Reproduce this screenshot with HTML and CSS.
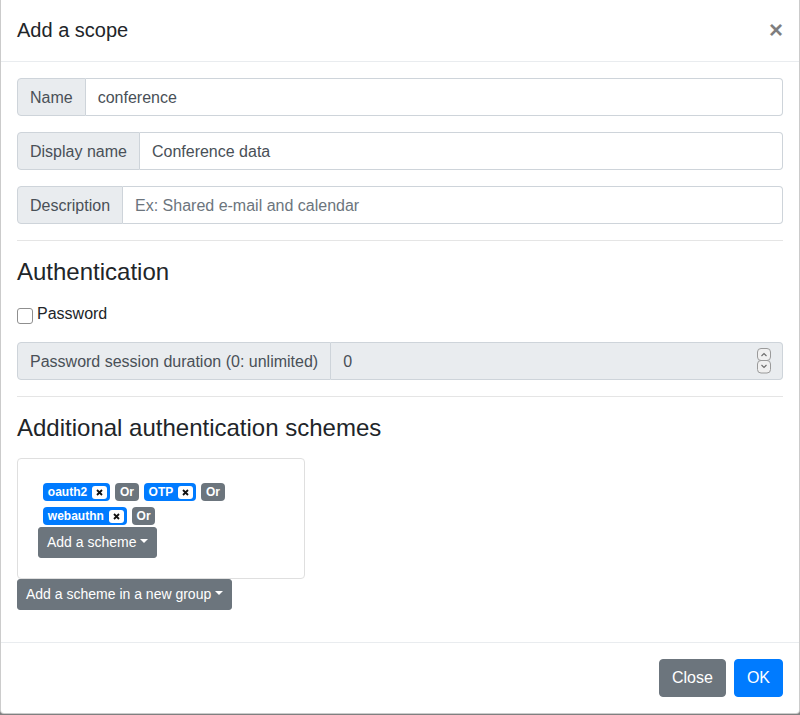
FILE: index.html
```html
<!DOCTYPE html>
<html>
<head>
<meta charset="utf-8">
<link rel="stylesheet" href="styles.css">
</head>
<body>
<div class="modal">
  <div class="modal-header">
    <h5 class="modal-title">Add a scope</h5>
    <button class="close" type="button">×</button>
  </div>
  <div class="modal-body">
    <div class="input-group">
      <span class="addon">Name</span>
      <span class="field">conference</span>
    </div>
    <div class="input-group">
      <span class="addon">Display name</span>
      <span class="field">Conference data</span>
    </div>
    <div class="input-group">
      <span class="addon">Description</span>
      <span class="field placeholder">Ex: Shared e-mail and calendar</span>
    </div>
    <hr class="sep">
    <h4 class="section-title">Authentication</h4>
    <div class="check-row">
      <span class="checkbox"></span>
      <span class="check-label">Password</span>
    </div>
    <div class="input-group">
      <span class="addon">Password session duration (0: unlimited)</span>
      <span class="field disabled">0
        <svg class="spin" width="14" height="26" viewBox="0 0 14 26">
          <rect x="0.5" y="0.5" width="13" height="12" rx="3.5" fill="#f0f0f0" stroke="#9a9a9a"/>
          <rect x="0.5" y="12.5" width="13" height="12.5" rx="3.5" fill="#f0f0f0" stroke="#9a9a9a"/>
          <path d="M4.5 8 L7 5.5 L9.5 8" fill="none" stroke="#6a6a6a" stroke-width="1.1"/>
          <path d="M4.5 17 L7 19.5 L9.5 17" fill="none" stroke="#6a6a6a" stroke-width="1.1"/>
        </svg>
      </span>
    </div>
    <hr class="sep">
    <h4 class="section-title">Additional authentication schemes</h4>
    <div class="scheme-group">
      <div class="scheme-box">
        <div class="badge-list">
          <span class="badge badge-primary">oauth2<span class="badge-x"><svg width="7" height="7" viewBox="0 0 7 7"><path d="M1 1 L6 6 M6 1 L1 6" stroke="#111" stroke-width="1.8"/></svg></span></span>
          <span class="badge badge-secondary">Or</span>
          <span class="badge badge-primary">OTP<span class="badge-x"><svg width="7" height="7" viewBox="0 0 7 7"><path d="M1 1 L6 6 M6 1 L1 6" stroke="#111" stroke-width="1.8"/></svg></span></span>
          <span class="badge badge-secondary">Or</span>
          <span class="badge badge-primary">webauthn<span class="badge-x"><svg width="7" height="7" viewBox="0 0 7 7"><path d="M1 1 L6 6 M6 1 L1 6" stroke="#111" stroke-width="1.8"/></svg></span></span>
          <span class="badge badge-secondary">Or</span>
        </div>
        <button class="btn btn-sm btn-secondary dropdown-toggle" type="button">Add a scheme</button>
      </div>
      <button class="btn btn-sm btn-secondary dropdown-toggle" type="button">Add a scheme in a new group</button>
    </div>
  </div>
  <div class="modal-footer">
    <button class="btn btn-secondary" type="button">Close</button>
    <button class="btn btn-primary" type="button">OK</button>
  </div>
</div>
</body>
</html>
```

FILE: styles.css
```css
* { box-sizing: border-box; }

html, body {
  margin: 0;
  padding: 0;
}

body {
  background: #808080;
  font-family: "Liberation Sans", Arial, sans-serif;
  font-size: 16px;
  line-height: 1.5;
  color: #212529;
  height: 715px;
  overflow: hidden;
}

.modal {
  width: 800px;
  background: #fff;
  border: 1px solid rgba(0, 0, 0, 0.2);
  border-top: 0;
  border-radius: 0 0 4px 4px;
  display: flex;
  flex-direction: column;
}

.modal-header {
  display: flex;
  align-items: flex-start;
  padding: 15px 16px 16px 16px;
  border-bottom: 1px solid #e9ecef;
}

.modal-title {
  margin: 0;
  font-size: 20px;
  font-weight: 500;
  line-height: 1.5;
}

.close {
  margin: -13px -16px -16px auto;
  padding: 16px;
  background: transparent;
  border: 0;
  font-family: "Liberation Sans", Arial, sans-serif;
  font-size: 24px;
  font-weight: 700;
  line-height: 1;
  color: #000;
  opacity: 0.5;
  text-shadow: 0 1px 0 #fff;
}

.modal-body {
  padding: 16px;
}

.input-group {
  display: flex;
  height: 38px;
  margin-bottom: 16px;
}

.addon {
  display: flex;
  align-items: center;
  padding: 7px 12px 5px 12px;
  background: #e9ecef;
  border: 1px solid #ced4da;
  border-radius: 4px 0 0 4px;
  color: #495057;
  white-space: nowrap;
}

.field {
  flex: 1;
  display: flex;
  align-items: center;
  padding: 7px 12px 5px 12px;
  border: 1px solid #ced4da;
  border-left: 0;
  border-radius: 0 4px 4px 0;
  color: #495057;
  background: #fff;
}

.field.placeholder { color: #6c757d; }

.field.disabled { background: #e9ecef; }

.spin { margin-left: auto; margin-right: -1px; margin-top: -2px; }

.sep {
  margin: 0 0 16px 0;
  border: 0;
  border-top: 1px solid rgba(0, 0, 0, 0.1);
  height: 0;
}

.section-title {
  margin: 0 0 16px 0;
  padding-top: 1px;
  height: 29px;
  font-size: 24px;
  font-weight: 500;
  line-height: 1.2;
}

.check-row {
  display: flex;
  align-items: center;
  height: 24px;
  margin-bottom: 16px;
}

.checkbox {
  width: 16px;
  height: 16px;
  border: 1px solid #8f8f8f;
  border-radius: 3px;
  background: #fff;
  margin-right: 4px;
  margin-top: 3px;
}

.scheme-group {
  margin-bottom: 16px;
  display: flex;
  flex-direction: column;
  align-items: flex-start;
}

.scheme-box {
  width: 288px;
  border: 1px solid #dfdfdf;
  border-radius: 4px;
  padding: 20px;
  display: flex;
  flex-direction: column;
  align-items: flex-start;
}

.badge-list {
  display: flex;
  flex-wrap: wrap;
  column-gap: 5px;
  row-gap: 6px;
  padding: 4px 0 2px 5px;
}

.badge {
  display: inline-flex;
  align-items: center;
  height: 18px;
  padding: 0 4.8px;
  font-size: 12px;
  font-weight: 700;
  line-height: 1;
  color: #fff;
  border-radius: 4px;
  white-space: nowrap;
}

.badge-primary { background: #007bff; padding-right: 3px; }
.badge-secondary { background: #6c757d; }

.badge-x {
  display: inline-flex;
  align-items: center;
  justify-content: center;
  width: 15px;
  height: 13px;
  margin-left: 5px;
  background: #fff;
  border-radius: 3px;
}

.btn {
  display: inline-block;
  font-family: "Liberation Sans", Arial, sans-serif;
  font-size: 16px;
  line-height: 1.5;
  padding: 6px 12px;
  border: 1px solid transparent;
  border-radius: 4px;
  color: #fff;
  cursor: pointer;
}

.btn-sm {
  font-size: 14px;
  padding: 4px 8px;
  border-radius: 3px;
}

.btn-secondary { background: #6c757d; border-color: #6c757d; }
.btn-primary { background: #007bff; border-color: #007bff; }

.dropdown-toggle::after {
  content: "";
  display: inline-block;
  margin-left: 0.255em;
  vertical-align: 0.255em;
  border-top: 0.3em solid;
  border-right: 0.3em solid transparent;
  border-left: 0.3em solid transparent;
  border-bottom: 0;
}

.modal-footer {
  display: flex;
  justify-content: flex-end;
  align-items: center;
  padding: 12px;
  border-top: 1px solid #e9ecef;
}

.modal-footer .btn { margin: 4px; }
```
